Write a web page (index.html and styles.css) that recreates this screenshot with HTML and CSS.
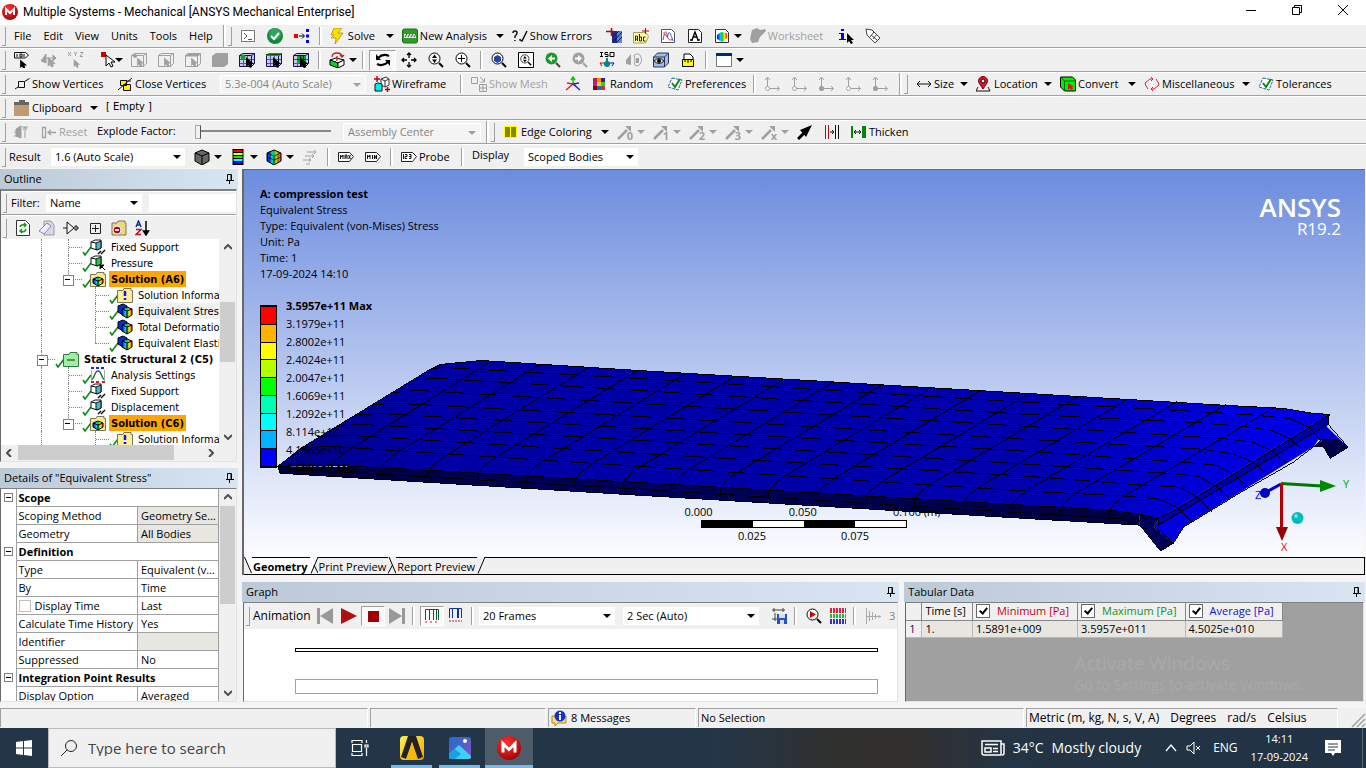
FILE: index.html
```html
<!DOCTYPE html>
<html lang="en">
<head>
<meta charset="utf-8">
<title>Multiple Systems - Mechanical [ANSYS Mechanical Enterprise]</title>
<link rel="stylesheet" href="styles.css">
</head>
<body>
<svg class="sprite" aria-hidden="true">
<defs>
<radialGradient id="redball" cx=".4" cy=".3" r=".8"><stop offset="0" stop-color="#f33"/><stop offset="1" stop-color="#900"/></radialGradient>
<linearGradient id="rain" x1="0" x2="1"><stop offset="0" stop-color="#00f"/><stop offset=".35" stop-color="#0cf"/><stop offset=".5" stop-color="#0c3"/><stop offset=".75" stop-color="#fd0"/><stop offset="1" stop-color="#f20"/></linearGradient>
<linearGradient id="photo" x2="1" y2="1"><stop offset="0" stop-color="#1b6fd0"/><stop offset="1" stop-color="#8a4fc0"/></linearGradient>
<linearGradient id="gold" x2="1" y2="1"><stop offset="0" stop-color="#fff04a"/><stop offset="1" stop-color="#f5a800"/></linearGradient>
</defs>
<symbol id="logo" viewBox="0 0 16 16"><circle cx="8" cy="8" r="8" fill="url(#redball)"/><path d="M4 11V5l4 4 4-4v6" fill="none" stroke="#fff" stroke-width="2"/></symbol>
<symbol id="term" viewBox="0 0 16 16"><path d="M1.500 2.500h13v11h-13z" fill="#fff" stroke="#777"/><path d="M4 5l3 3-3 3M8 11.500h4" fill="none" stroke="#555"/></symbol>
<symbol id="ok" viewBox="0 0 16 16"><circle cx="8" cy="8" r="8" fill="#12883a"/><circle cx="8" cy="6" r="6" fill="#4cc27a" opacity=".5"/><path d="M4 8l3 3 5-6" fill="none" stroke="#fff" stroke-width="2"/></symbol>
<symbol id="branch" viewBox="0 0 16 16"><path d="M0 6h4v4H0z" fill="#e00"/><path d="M5 8h5M8 5.500L10.500 8 8 10.500" fill="none" stroke="#000"/><path d="M12 1h3v3h-3zM12 6.500h3v3h-3zM12 12h3v3h-3z" fill="#00f"/></symbol>
<symbol id="bolt" viewBox="0 0 16 16"><path d="M4 0h8L8 5h5L5 16l1-6H1l3-3H1z" fill="#fd0" stroke="#a80" stroke-width=".7"/></symbol>
<symbol id="newan" viewBox="0 0 16 16"><rect x=".5" y="1" width="15" height="14" rx="2" fill="#2e9b2e" stroke="#187018"/><path d="M2 6h12v4H2z" fill="#d8ecc8"/><path d="M3 9l2-3M6 9l2-3M9 9l2-3M12 9l2-3" stroke="#444"/></symbol>
<symbol id="qcheck" viewBox="0 0 16 16"><path d="M1 5q0-2 2-2t2 2q0 1.500-2 3v2M3 12v1M8 11v1l2 1 5-10" fill="none" stroke="#111" stroke-width="1.500"/></symbol>
<symbol id="section" viewBox="0 0 16 16"><path d="M6 3h10v12H6z" fill="#5a84d8"/><path d="M6 3h5v12H6z" fill="#1c2f80"/><path d="M7 14L16 4M7 9l6-6M10 15l6-6" stroke="#0a1a50"/><path d="M0 3.500h8M5.500 0v8" stroke="#b00" stroke-width="1.500"/></symbol>
<symbol id="abc" viewBox="0 0 16 16"><path d="M.5 4.500h12l3 4-3 6.500H.5z" fill="#ff9" stroke="#a96"/><path d="M2.500 13V8h2v5M2 11h3M6.500 6v7h2V9h-2M12.500 9h-2v4h2" fill="none" stroke="#222"/><path d="M9 3h7M12.500 0v6" stroke="#b00"/></symbol>
<symbol id="chart" viewBox="0 0 16 16"><path d="M1.500 1.500h10l3 3v10h-13z" fill="#fff" stroke="#555"/><path d="M3 12C5 2 6 2 7 7s3 6 6 4" fill="none" stroke="#c33"/><path d="M3 5c3 0 4 8 5 2s3 0 5 6" fill="none" stroke="#36c"/></symbol>
<symbol id="note" viewBox="0 0 16 16"><path d="M1.500 1.500h10l3 3v10h-13z" fill="#fff" stroke="#222"/><path d="M5 12l3-8 3 8M6 9h4M3 12h3M10 12h3" fill="none" stroke="#000" stroke-width="1.400"/></symbol>
<symbol id="imgs" viewBox="0 0 16 16"><path d="M1.500 1.500h10l3 3v10h-13z" fill="#fff" stroke="#333"/><path d="M3 7l4-3 6 1v5l-5 4-5-3z" fill="url(#rain)"/></symbol>
<symbol id="sheet" viewBox="0 0 16 16"><path d="M2 2l5-2 3 2 5-1 1 2-4 4-2 2-2 5-6 1-2-4z" fill="#a0a0a0"/></symbol>
<symbol id="info" viewBox="0 0 16 16"><path d="M3 1h3v2H3zM1 5h5v6h2v1H1v-1h2V6H1z" fill="#00d"/><path d="M9 5v10l2-2 2 3 2-1-2-3h3z" fill="#000"/></symbol>
<symbol id="tag" viewBox="0 0 16 16"><path d="M1 1l6 1 8 8-5 5-8-8zM5 9l4-5M8 11l4-5M6 7l6 5" fill="#fff" stroke="#444"/></symbol>
<symbol id="cur" viewBox="0 0 16 16"><path d="M7 5v10l2-2 2 3 2-1-1-3h3z"/></symbol>
<symbol id="tagcur" viewBox="0 0 16 16"><path d="M.5.500h11l3 2.500-3 3H.5zM3 2v3M6 2h2v3H6zM10 2v3" fill="none" stroke="#111"/><use href="#cur" width="14" height="14" y="3" x="0"/></symbol>
<symbol id="gcur" viewBox="0 0 16 16"><g fill="#a0a0a0" stroke="#a0a0a0"><path d="M0 9l5-7v9zM5 6h8"/><path d="M12 3l3 3-3 3z"/><use href="#cur" x="1" width="14" height="16"/></g></symbol>
<symbol id="xyz" viewBox="0 0 16 16"><path d="M0 0l3 4M3 0L0 4M6 0l1.500 2L9 0M7.500 2v2M12 .5h3l-3 4h3" fill="none" stroke="#a0a0a0"/><use href="#cur" y="3" width="13" height="13" fill="#a0a0a0"/></symbol>
<symbol id="redcur" viewBox="0 0 16 16"><path d="M0 0h5v5H0z" fill="#c00"/><path d="M5 3v11l3-3 2 4 2-1-2-4h4z" fill="#fff" stroke="#000"/></symbol>
<symbol id="gcube" viewBox="0 0 16 16"><path d="M.5 3.500l3-2h12v10l-3 3H.5zM.5 3.500h12v11M12.500 3.500l3-2" fill="none" stroke="#a0a0a0"/><use href="#cur" fill="#a0a0a0" width="14" height="14" y="1"/></symbol>
<symbol id="gcubev" viewBox="0 0 16 16"><use href="#gcube"/><circle cx="4" cy="4" r="2" fill="#a0a0a0"/></symbol>
<symbol id="gcubef" viewBox="0 0 16 16"><use href="#gcube"/><path d="M0 3.500l3-2h13l-3 3H0z" fill="#a0a0a0"/></symbol>
<symbol id="gblock" viewBox="0 0 16 16"><path d="M0 4l4-3h12v11l-4 3H0z" fill="#a0a0a0"/></symbol>
<symbol id="bcube" viewBox="0 0 16 16"><path d="M.5 3.500l3-2h12v10l-3 3H.5z" fill="#c8c8ee"/><path d="M4.500 4v11M8.500 4v11M1 7.500h15M1 11.500h15" fill="none" stroke="#55a"/><path d="M.5 3.500l3-2h12v10l-3 3H.5zM.5 3.500h12v11M12.500 3.500l3-2" fill="none" stroke="#115"/><use href="#cur"/></symbol>
<symbol id="bcube1" viewBox="0 0 16 16"><use href="#bcube"/><circle cx="4" cy="5" r="2.500" fill="#0a2"/></symbol>
<symbol id="bcube2" viewBox="0 0 16 16"><use href="#bcube"/><path d="M3 1h13l-3 3H0z" fill="#0a0"/><path d="M0 2.500h15" stroke="#050"/></symbol>
<symbol id="bcube3" viewBox="0 0 16 16"><use href="#bcube"/><path d="M4 4h9v7H4z" fill="#0a2"/><path d="M7.500 4v7M4 7.500h9M10.500 4v7" stroke="#031"/><use href="#cur"/></symbol>
<symbol id="rotcube" viewBox="0 0 16 16"><path d="M1 8l6-2 8 2-6 3z" fill="#fff" stroke="#000"/><path d="M1 8l8 3v5l-8-3z" fill="#0d2" stroke="#000"/><path d="M9 11l6-3v5l-6 3z" fill="#fff" stroke="#000"/><path d="M3 5q0-4 5-4t5 4M11 3l2 2 2-2M8 4v5" fill="none" stroke="#b22" stroke-width="1.300"/></symbol>
<symbol id="rot" viewBox="0 0 16 16"><path d="M3 6Q8 1 14 4M13 10Q8 15 2 12" fill="none" stroke="#000" stroke-width="2"/><path d="M1 2v6h5zM15 14V8h-5z"/></symbol>
<symbol id="move" viewBox="0 0 16 16"><path d="M8 1v5M8 10v5M1 8h5M10 8h5M6 3l2-2 2 2M6 13l2 2 2-2M3 6L1 8l2 2M13 6l2 2-2 2" fill="none" stroke="#000" stroke-width="1.300"/></symbol>
<symbol id="mag" viewBox="0 0 16 16"><circle cx="6.500" cy="6.500" r="5.500" fill="#fff" stroke="#000"/><path d="M11 11l4 4" stroke="#000" stroke-width="2"/></symbol>
<symbol id="magud" viewBox="0 0 16 16"><use href="#mag"/><path d="M4 6l2.500-3.500L9 6zM4 7.500L6.500 11 9 7.500z"/></symbol>
<symbol id="magp" viewBox="0 0 16 16"><use href="#mag"/><path d="M3 6.500h7M6.500 3v7" stroke="#000"/></symbol>
<symbol id="magb" viewBox="0 0 16 16"><use href="#mag"/><path d="M3 5l3.500-2L10 5v4l-3.500 2L3 9z" fill="#24a"/></symbol>
<symbol id="magbox" viewBox="0 0 16 16"><path d="M.5.5h15v15H.5z" fill="#fff" stroke="#000"/><use href="#magud" x="2" y="2" width="12" height="12"/></symbol>
<symbol id="magg" viewBox="0 0 16 16"><circle cx="6.500" cy="6.500" r="6" fill="#1c9a2c"/><path d="M10 5.500H7V3L3 6.500 7 10V7.500h3z" fill="#fff"/><path d="M11 11l4 4" stroke="#444" stroke-width="2"/></symbol>
<symbol id="maggr" viewBox="0 0 16 16"><circle cx="6.500" cy="6.500" r="6" fill="#a0a0a0"/><path d="M3 5.500h3V3l4 3.500L6 10V7.500H3z" fill="#fff"/><path d="M11 11l4 4" stroke="#a0a0a0" stroke-width="2"/></symbol>
<symbol id="iso" viewBox="0 0 16 16"><path d="M1 .5h3M2.500 0v5M1 4.500h3M9 .5H6v2h3v2H6M11 .5h4v4h-4z" fill="none" stroke="#000"/><path d="M8 11V6" stroke="#088" stroke-width="2"/><path d="M8 11H1l2 3" fill="none" stroke="#c00"/><path d="M8 11h7l-2 3" fill="none" stroke="#00c"/><circle cx="8" cy="12" r="3" fill="#088"/></symbol>
<symbol id="face" viewBox="0 0 16 16"><path d="M0 8l5-6v11l-5-1z" fill="#a0a0a0"/><path d="M8 3q5-3 7 2t-3 9q-5 0-3-5z" fill="none" stroke="#a0a0a0"/><path d="M10 6h3v5h-3z" fill="#a0a0a0"/></symbol>
<symbol id="eye" viewBox="0 0 16 16"><path d="M.5 5l4-4h11v10l-4 4H.5z" fill="#9bc0e8" stroke="#335"/><path d="M.5 5h11v10M11.500 5l4-4" fill="none" stroke="#335"/><path d="M1 9q5-5 10 0-5 5-10 0" fill="#ddd" stroke="#222"/><circle cx="6" cy="9" r="2"/></symbol>
<symbol id="ruler" viewBox="0 0 16 16"><path d="M4 7V2h6l3 3v2" fill="#fff" stroke="#000"/><path d="M2.500 7.500h11v7h-11z" fill="#ff0" stroke="#000"/><path d="M5 7v3M8 7v4M11 7v3" stroke="#000"/></symbol>
<symbol id="win" viewBox="0 0 16 16"><path d="M.5 1.500h15v13H.5z" fill="#fff" stroke="#777"/><path d="M0 1h16v3H0z" fill="#002a80"/></symbol>
<symbol id="vtx" viewBox="0 0 16 16"><path d="M4.500 5.500h6v6h-6zM1 13l3-2M10.500 5.500l5-3" fill="none" stroke="#111"/></symbol>
<symbol id="cvtx" viewBox="0 0 16 16"><path d="M3.500 4.500h6v5h-6zM6.500 8.500h7v6h-7z" fill="#fe0" stroke="#111"/><path d="M1 14l14-12M9 5h5" stroke="#111"/></symbol>
<symbol id="wire" viewBox="0 0 16 16"><path d="M7 3l5-2 3 2v6l-4 2-4-2zM7 3l4 2 4-2M11 5v6" fill="#fff" stroke="#333"/><path d="M1 8l3-1 4 1v7H1z" fill="#0ee" stroke="#111"/><path d="M0 3h6M3 0v6M11 13.500h5M13.500 11v5" stroke="#b00" stroke-width="1.400"/></symbol>
<symbol id="smesh" viewBox="0 0 16 16"><path d="M.5 1.500h6v6h-6zM9 1l4 4M13.500 2v4h-4M8.500 8.500h7v7h-7zM12 8v8M8 12h8" fill="none" stroke="#a0a0a0"/></symbol>
<symbol id="axes" viewBox="0 0 16 16"><path d="M8 8V1M6 4l2-3 2 3" fill="none" stroke="#0c0" stroke-width="1.500"/><path d="M8 8l-7 6M8 8l-6-1M8 8l3 2" stroke="#d22" stroke-width="1.500"/><path d="M8 8l7 6M8 8l6-1" stroke="#22d" stroke-width="1.500"/></symbol>
<symbol id="random" viewBox="0 0 16 16"><path d="M1 2h4v4H1z" fill="#b22"/><path d="M5 2h4v4H5z" fill="#f80"/><path d="M9 2h4v4H9z" fill="#22a"/><path d="M1 6h4v4H1z" fill="#a2a"/><path d="M5 6h4v4H5z" fill="#ed0"/><path d="M9 6h4v4H9z" fill="#3c3"/><path d="M1 10h4v4H1z" fill="#800"/><path d="M5 10h4v4H5z" fill="#26c"/><path d="M9 10h4v4H9z" fill="#c33"/></symbol>
<symbol id="pref" viewBox="0 0 16 16"><path d="M5 2l10 2-4 10L1 11z" fill="#fff" stroke="#269" stroke-dasharray="3 1"/><path d="M5 7l3 4 5-8" fill="none" stroke="#181" stroke-width="2"/></symbol>
<symbol id="edge" viewBox="0 0 16 16"><path d="M3.500 13V2M1 4l2.500-3L6 4M4 12.500h11M13 10l2.500 2.500L13 15" fill="none" stroke="#a0a0a0"/><circle cx="3.500" cy="12.500" r="2" fill="#fff" stroke="#a0a0a0"/></symbol>
<symbol id="edgef" viewBox="0 0 16 16"><use href="#edge"/><circle cx="3.500" cy="12.500" r="2.500" fill="#a0a0a0"/></symbol>
<symbol id="size" viewBox="0 0 16 16"><path d="M1 8h14M4 5L1 8l3 3M12 5l3 3-3 3" fill="none" stroke="#111"/></symbol>
<symbol id="loc" viewBox="0 0 16 16"><path d="M7 13L3 7a4.500 4.500 0 1 1 8 0z" fill="#e13" stroke="#700"/><circle cx="7" cy="5" r="2" fill="#fff" stroke="#000"/><path d="M2 11l-2 4h14l-2-4" fill="none" stroke="#111"/></symbol>
<symbol id="conv" viewBox="0 0 16 16"><path d="M.5 1h12l3 3v11h-11l-4-4z" fill="#0e0" stroke="#000"/><path d="M.5 1l4 4v10M4.500 5h11" fill="none" stroke="#060"/><path d="M8 7v7l2-2 1 2 2-1-1-2h2z" fill="#d11"/></symbol>
<symbol id="misc" viewBox="0 0 16 16"><path d="M2 10L1 7l5-4h3M7 1l2 2-2 2M14 6l1 3-5 4H7M9 11l-2 2 2 2M12 3l2 3M2 10l2 3" fill="none" stroke="#d23"/></symbol>
<symbol id="clip" viewBox="0 0 16 16"><path d="M0 2h15v14H0z" fill="#c09a72"/><path d="M0 2h15v3H0zM5 0h6v3H5z" fill="#666"/></symbol>
<symbol id="expl" viewBox="0 0 16 16"><path d="M2 5l5-3v12l-5-2zM0 8h3M0 12h3" fill="#a0a0a0" stroke="#a0a0a0"/><path d="M8 3h6M11 3v11M9 6l2-3 2 3" fill="none" stroke="#a0a0a0"/></symbol>
<symbol id="reset" viewBox="0 0 16 16"><path d="M1.500 3.500h3v10h-3zM7 8.500h8M10 6L7 8.500l3 2.500" fill="none" stroke="#a0a0a0" stroke-width="1.300"/></symbol>
<symbol id="ecol" viewBox="0 0 16 16"><path d="M1 2h13v12H1z" fill="#ff0"/><path d="M2 3h5v10H2zM8 3h5v10H8z" fill="#880"/></symbol>
<symbol id="slash" viewBox="0 0 16 16"><path d="M1 15L10 6" stroke="#a0a0a0" stroke-width="2.500"/><path d="M15 1v6L9 1z" fill="#a0a0a0" transform="translate(-1 1)"/></symbol>
<symbol id="barrow" viewBox="0 0 16 16"><path d="M1 15L9 7" stroke="#000" stroke-width="3"/><path d="M15 1L3 6l6 7zM15 1l-3 9"/></symbol>
<symbol id="gap" viewBox="0 0 16 16"><path d="M1.500 1v14M4.500 1v14" stroke="#a11"/><path d="M11.500 1v14M14.500 1v14M6 8h4M8 6l2 2-2 2" fill="none" stroke="#111"/></symbol>
<symbol id="thick" viewBox="0 0 16 16"><path d="M1 2v12" stroke="#080" stroke-width="2"/><path d="M11 2h4v12h-4z" fill="#080"/><path d="M3 8h7M5 6L3 8l2 2M8 6l2 2-2 2" fill="none" stroke="#111"/></symbol>
<symbol id="cube" viewBox="0 0 16 16"><path d="M1 4l7-3 7 3v8l-7 4-7-4z" fill="#666" stroke="#000"/><path d="M1 4l7 3 7-3M8 7v9" fill="none" stroke="#000"/></symbol>
<symbol id="rcube" viewBox="0 0 16 16"><path d="M1 4l7-3 7 3v8l-7 4-7-4z" fill="url(#rain)" stroke="#000"/><path d="M1 4l7 3 7-3M8 7v9M1 8l7 3 7-3M4 2v12M12 2v12" fill="none" stroke="#111" stroke-width=".8"/></symbol>
<symbol id="bands" viewBox="0 0 11 16"><path d="M0 0h11v16H0z"/><path d="M1 1h9v2H1z" fill="#f00"/><path d="M1 4h9v2H1z" fill="#ff0"/><path d="M1 7h9v2H1z" fill="#0e0"/><path d="M1 10h9v2H1z" fill="#0ff"/><path d="M1 13h9v2H1z" fill="#00f"/></symbol>
<symbol id="vecs" viewBox="0 0 16 16"><path d="M5 3h9M3 7h9M1 11h8M12 1l2 2-2 2M10 5l2 2-2 2M7 9l2 2-2 2M4 15h4" fill="none" stroke="#a0a0a0"/></symbol>
<symbol id="max" viewBox="0 0 16 16"><path d="M.5 3.500h11l4 4-4 5H.5z" fill="#fff" stroke="#222"/><path d="M2.500 10V6l1.500 2 1-2v4M7 10V6h2v4M7 8h2M10.500 6l2 4M12.500 6l-2 4" fill="none" stroke="#111"/></symbol>
<symbol id="min" viewBox="0 0 16 16"><path d="M.5 3.500h11l4 4-4 5H.5z" fill="#fff" stroke="#222"/><path d="M2.500 10V6l1.500 2 1-2v4M7.500 6v4M9.500 10V6l2 4V6" fill="none" stroke="#111"/></symbol>
<symbol id="probe" viewBox="0 0 16 16"><path d="M.5 3.500h11l4 4-4 5H.5z" fill="#fff" stroke="#222"/><path d="M2.500 5v5M4 5.500h2v2H4v2h2M8 5.500h2v4H8M8 7.500h2" fill="none" stroke="#111"/></symbol>
<symbol id="refresh" viewBox="0 0 16 16"><path d="M1.500.5h9l4 4v11h-13z" fill="#fff" stroke="#333"/><path d="M5 7q1-3 5-2M11 9q-1 4-5 2M9 3l2 2-2 2M7 9l-2 2 2 2" fill="none" stroke="#191" stroke-width="1.500"/></symbol>
<symbol id="eraser" viewBox="0 0 16 16"><path d="M5 1h7l3 4v10H5z" fill="#d8d8e4" stroke="#99a"/><path d="M0 11l8-8 4 3-7 8z" fill="#eef" stroke="#88a"/></symbol>
<symbol id="gate" viewBox="0 0 16 16"><path d="M0 8h4M4 2v12l7-6zM12 6h2v4h-2zM14 8h2" fill="none" stroke="#111"/></symbol>
<symbol id="plus" viewBox="0 0 16 16"><path d="M3.500 3.500h10v10h-10zM8.500 5v7M5 8.500h7" fill="none" stroke="#222"/></symbol>
<symbol id="folder" viewBox="0 0 16 16"><path d="M1 3h5l1-2h7v2h1v12H1z" fill="#f0d878" stroke="#776"/><circle cx="6" cy="10" r="4" fill="#b02" stroke="#fff"/><path d="M4 10h4" stroke="#fff" stroke-width="2"/></symbol>
<symbol id="az" viewBox="0 0 16 16"><path d="M1 7l2.500-6L6 7M2 5h3" fill="none" stroke="#139" stroke-width="1.500"/><path d="M1 9.500h5l-5 5h5" fill="none" stroke="#b12" stroke-width="1.500"/><path d="M11 1v12M8.500 11l2.500 4 2.500-4z" stroke="#000" stroke-width="1.500"/></symbol>
<symbol id="chk" viewBox="0 0 10 10"><path d="M1 6l2 3 6-8" fill="none" stroke="#0a8a12" stroke-width="1.600"/></symbol>
<symbol id="sup" viewBox="0 0 16 16"><path d="M1 3l4-2h6v8l-4 2-6-2z" fill="#fff" stroke="#111"/><path d="M6 4l5-2v7l-4 2-1-1z" fill="#4bd" stroke="#111"/><path d="M1 3l5 1" stroke="#111"/><path d="M8 15l3-3M11 15l4-4" stroke="#000" stroke-width="1.400"/></symbol>
<symbol id="pres" viewBox="0 0 16 16"><path d="M1 3l4-2h6v8l-4 2-6-2z" fill="#fff" stroke="#111"/><path d="M6 4l5-2v7l-4 2-1-1z" fill="#2c4" stroke="#111"/><path d="M1 3l5 1" stroke="#111"/><path d="M10 10h4l-4 4zM12 12l3 3" stroke="#000"/></symbol>
<symbol id="soln" viewBox="0 0 16 16"><path d="M.5 3.500H6l1-2h7v2h1.500v12H.5z" fill="#ffe98a" stroke="#775"/><path d="M3 8l5-2 5 2v4l-5 3-5-3z" fill="url(#rain)" stroke="#000"/><path d="M3 8l5 2 5-2M8 10v5" fill="none" stroke="#000"/></symbol>
<symbol id="sinfo" viewBox="0 0 16 16"><path d="M.5 3.500H6l1-2h7v2h1.500v12H.5z" fill="#ffef9a" stroke="#775"/><path d="M8 4v5M8 11v2" stroke="#11d" stroke-width="2.500"/></symbol>
<symbol id="res" viewBox="0 0 16 16"><path d="M1 3l5-2 4 2v7l-4 2-5-3z" fill="#03c" stroke="#000"/><path d="M5 6l5-2 5 2v6l-5 3-5-3z" fill="url(#rain)" stroke="#000"/><path d="M5 6l5 2 5-2M10 8v7" fill="none" stroke="#000"/></symbol>
<symbol id="struct" viewBox="0 0 16 16"><path d="M.5 3.500H6l1-2h7v2h1.500v12H.5z" fill="#9df09d" stroke="#374"/><path d="M4 9h8" stroke="#222"/></symbol>
<symbol id="aset" viewBox="0 0 16 16"><path d="M1 13c4-1 3-9 7-9s3 8 7 9" fill="none" stroke="#264" stroke-width="1.300"/><path d="M1 1h3M6 1h3M11 1h3" stroke="#22d" stroke-width="2"/><path d="M1 15h3M6 15h3M12 15h3" stroke="#c22" stroke-width="2"/><path d="M1.500 3v10M14.500 3v10" stroke="#aaa"/></symbol>
<symbol id="pin" viewBox="0 0 8 10"><path d="M1.500 6V.5h4V6M5 1v5M0 6.500h8M3.500 7v3" fill="none" stroke="#000"/></symbol>
<symbol id="first" viewBox="0 0 16 16"><path d="M0 0h3v16H0zM16 0v16L3 8z" fill="#999"/></symbol>
<symbol id="last" viewBox="0 0 16 16"><path d="M13 0h3v16h-3zM0 0v16l13-8z" fill="#999"/></symbol>
<symbol id="play" viewBox="0 0 16 16"><path d="M0 0l16 8-16 8z" fill="#b01010"/></symbol>
<symbol id="stop" viewBox="0 0 16 16"><path d="M3 3h11v11H3z" fill="#a00000"/></symbol>
<symbol id="comb" viewBox="0 0 16 16"><path d="M1.500 12V1.500h13V12M5.500 1v11M9.500 1v11M12.500 1v11" fill="none" stroke="#153"/><path d="M1 14h3M6 14h3M11 14h3" stroke="#c22" stroke-dasharray="2 1"/></symbol>
<symbol id="combb" viewBox="0 0 16 16"><path d="M1.500 10V.5h12V10M4.500 1v9M9.500 1v9M10.500 1v9" fill="none" stroke="#139"/><path d="M1 13h13" stroke="#c22" stroke-dasharray="2 1"/></symbol>
<symbol id="save" viewBox="0 0 16 16"><path d="M1 2h13M3 0v4M12 0v4M4 5v8M1 11h6" stroke="#444" fill="none"/><path d="M6 6h10v10H6z" fill="#25b"/><path d="M8 6h6v4H8zM9 12h4v4H9z" fill="#dde"/></symbol>
<symbol id="magr" viewBox="0 0 16 16"><use href="#mag"/><path d="M4 3l6 3.500L4 10z" fill="#c00"/></symbol>
<symbol id="grid3" viewBox="0 0 16 16"><path d="M0 2.500h16" stroke="#d24" stroke-width="5" stroke-dasharray="2 1"/><path d="M0 8h16" stroke="#2b4" stroke-width="4" stroke-dasharray="2 1"/><path d="M0 13.500h16" stroke="#33c" stroke-width="5" stroke-dasharray="2 1"/></symbol>
<symbol id="hist" viewBox="0 0 16 16"><path d="M1.500 0v16M4.500 3v10M7.500 4v8M10.500 6v5M14 7v3M1 8.500h15" stroke="#aaa"/></symbol>
<symbol id="msg" viewBox="0 0 16 16"><path d="M1 6h14v7H7l-3 3v-3H1z" fill="#fd6" stroke="#a82"/><circle cx="9" cy="6" r="5.500" fill="#13c"/><path d="M9 2v2M9 5v5" stroke="#fff" stroke-width="2"/></symbol>
</svg>

<header class="titlebar">
<svg class="ic"><use href="#logo"/></svg><h1>Multiple Systems - Mechanical [ANSYS Mechanical Enterprise]</h1>
<div class="winbtns">
<button aria-label="Minimize"><svg viewBox="0 0 12 12"><path d="M1 6.500h10" stroke="#000"/></svg></button>
<button aria-label="Restore"><svg viewBox="0 0 12 12"><path d="M1.500 3.500h7v7h-7zM3.500 3V1.500h7v7H9" fill="none" stroke="#000"/></svg></button>
<button aria-label="Close"><svg viewBox="0 0 12 12"><path d="M1 1l10 10M11 1L1 11" stroke="#000"/></svg></button>
</div>
</header>

<div class="bar">
<i class="grip"></i>
<nav class="menu"><button>File</button><button>Edit</button><button>View</button><button>Units</button><button>Tools</button><button>Help</button></nav>
<i class="end"></i><i class="grip"></i>
<button class="ib" aria-label="Command window"><svg class="ic"><use href="#term"/></svg></button>
<button class="ib" aria-label="Check"><svg class="ic"><use href="#ok"/></svg></button>
<button class="ib" aria-label="Generate"><svg class="ic"><use href="#branch"/></svg></button>
<i class="sep"></i>
<button class="tb w-m"><svg class="ic"><use href="#bolt"/></svg>Solve</button><button class="dd" aria-label="Solve options"></button>
<button class="tb w-xl"><svg class="ic"><use href="#newan"/></svg>New Analysis</button><button class="dd" aria-label="Analysis types"></button>
<button class="tb w-xl"><svg class="ic"><use href="#qcheck"/></svg>Show Errors</button>
<button class="ib" aria-label="Section plane"><svg class="ic"><use href="#section"/></svg></button>
<button class="ib" aria-label="Annotation"><svg class="ic"><use href="#abc"/></svg></button>
<button class="ib" aria-label="Chart"><svg class="ic"><use href="#chart"/></svg></button>
<button class="ib" aria-label="Comment"><svg class="ic"><use href="#note"/></svg></button>
<button class="ibd" aria-label="Figure"><svg class="ic"><use href="#imgs"/></svg></button><button class="dd" aria-label="Figure options"></button>
<button class="tb w-l off" disabled><svg class="ic"><use href="#sheet"/></svg>Worksheet</button>
<button class="ib" aria-label="Selection information"><svg class="ic"><use href="#info"/></svg></button>
<button class="ib" aria-label="Tag"><svg class="ic"><use href="#tag"/></svg></button>
</div>

<div class="bar">
<i class="grip"></i>
<button class="ib" aria-label="Label"><svg class="ic"><use href="#tagcur"/></svg></button>
<button class="ib" aria-label="Direction"><svg class="ic"><use href="#gcur"/></svg></button>
<button class="ib" aria-label="Coordinates"><svg class="ic"><use href="#xyz"/></svg></button>
<button class="ibd push" aria-label="Select mode"><svg class="ic"><use href="#redcur"/></svg></button><button class="dd" aria-label="Select mode options"></button>
<button class="ib" aria-label="Vertex"><svg class="ic"><use href="#gcubev"/></svg></button>
<button class="ib" aria-label="Edge"><svg class="ic"><use href="#gcube"/></svg></button>
<button class="ib" aria-label="Face"><svg class="ic"><use href="#gcubef"/></svg></button>
<button class="ib" aria-label="Body"><svg class="ic"><use href="#gblock"/></svg></button>
<button class="ib" aria-label="Node"><svg class="ic"><use href="#bcube1"/></svg></button>
<button class="ib" aria-label="Element face"><svg class="ic"><use href="#bcube2"/></svg></button>
<button class="ib" aria-label="Element"><svg class="ic"><use href="#bcube3"/></svg></button>
<i class="sep"></i>
<button class="ibd" aria-label="Extend"><svg class="ic"><use href="#rotcube"/></svg></button><button class="dd" aria-label="Extend options"></button>
<i class="sep tight"></i>
<button class="ib pressed" aria-label="Rotate"><svg class="ic"><use href="#rot"/></svg></button>
<button class="ib pad" aria-label="Pan"><svg class="ic"><use href="#move"/></svg></button>
<button class="ib" aria-label="Zoom"><svg class="ic"><use href="#magud"/></svg></button>
<button class="ib" aria-label="Box zoom"><svg class="ic"><use href="#magp"/></svg></button>
<i class="sep"></i>
<button class="ib" aria-label="Zoom to fit"><svg class="ic"><use href="#magb"/></svg></button>
<button class="ib" aria-label="Magnifier window"><svg class="ic"><use href="#magbox"/></svg></button>
<button class="ib" aria-label="Previous view"><svg class="ic"><use href="#magg"/></svg></button>
<button class="ib" aria-label="Next view"><svg class="ic"><use href="#maggr"/></svg></button>
<button class="ib" aria-label="Isometric"><svg class="ic"><use href="#iso"/></svg></button>
<button class="ib" aria-label="Look at"><svg class="ic"><use href="#face"/></svg></button>
<button class="ib" aria-label="Manage views"><svg class="ic"><use href="#eye"/></svg></button>
<button class="ib" aria-label="Rescale"><svg class="ic"><use href="#ruler"/></svg></button>
<i class="sep"></i>
<button class="ibd" aria-label="Viewports"><svg class="ic"><use href="#win"/></svg></button><button class="dd" aria-label="Viewport layout"></button>
</div>

<div class="bar">
<i class="grip"></i>
<button class="tb w-xxl"><svg class="ic"><use href="#vtx"/></svg>Show Vertices</button>
<button class="tb w-xxl"><svg class="ic"><use href="#cvtx"/></svg>Close Vertices</button>
<span class="combo c-l flat"><select disabled aria-label="Vertex scale"><option>5.3e-004 (Auto Scale)</option></select></span>
<button class="tb w-l"><svg class="ic"><use href="#wire"/></svg>Wireframe</button>
<i class="sep"></i>
<button class="tb w-xl off" disabled><svg class="ic"><use href="#smesh"/></svg>Show Mesh</button>
<button class="ib" aria-label="Show coordinate systems"><svg class="ic"><use href="#axes"/></svg></button>
<button class="tb w-r"><svg class="ic"><use href="#random"/></svg>Random</button>
<button class="tb w-l"><svg class="ic"><use href="#pref"/></svg>Preferences</button>
<i class="sep"></i>
<button class="ib" aria-label="Edge direction 1"><svg class="ic"><use href="#edge"/></svg></button>
<button class="ib" aria-label="Edge direction 2"><svg class="ic"><use href="#edge"/></svg></button>
<button class="ib" aria-label="Edge direction 3"><svg class="ic"><use href="#edgef"/></svg></button>
<button class="ib" aria-label="Edge direction 4"><svg class="ic"><use href="#edge"/></svg></button>
<button class="ib" aria-label="Edge direction 5"><svg class="ic"><use href="#edgef"/></svg></button>
<i class="end"></i><i class="grip"></i>
<button class="tb w-s"><svg class="ic"><use href="#size"/></svg>Size</button><button class="dd" aria-label="Size options"></button>
<button class="tb w-r2"><svg class="ic"><use href="#loc"/></svg>Location</button><button class="dd" aria-label="Location options"></button>
<button class="tb w-r2"><svg class="ic"><use href="#conv"/></svg>Convert</button><button class="dd" aria-label="Convert options"></button>
<button class="tb w-mx"><svg class="ic"><use href="#misc"/></svg>Miscellaneous</button><button class="dd" aria-label="Miscellaneous options"></button>
<button class="tb"><svg class="ic"><use href="#pref"/></svg>Tolerances</button>
</div>

<div class="bar">
<i class="grip"></i>
<button class="tb w-c"><svg class="ic"><use href="#clip"/></svg>Clipboard</button><button class="dd" aria-label="Clipboard options"></button>
<span class="small">[ Empty ]</span>
</div>

<div class="bar">
<i class="grip"></i>
<button class="ib" aria-label="Explode"><svg class="ic"><use href="#expl"/></svg></button>
<button class="tb w-m off" disabled><svg class="ic"><use href="#reset"/></svg>Reset</button>
<label class="lbl w-mx" for="explode">Explode Factor:</label>
<input id="explode" class="slider" type="range" value="0">
<span class="combo c-e flat"><select disabled aria-label="Explode origin"><option>Assembly Center</option></select></span>
<i class="end"></i><i class="grip"></i>
<button class="tb w-mx"><svg class="ic"><use href="#ecol"/></svg>Edge Coloring</button><button class="dd" aria-label="Edge coloring options"></button>
<button class="ibd num" aria-label="Edges 0"><svg class="ic"><use href="#slash"/></svg><b>0</b></button><button class="dd gray" aria-label="Edges 0 options"></button>
<button class="ibd num" aria-label="Edges 1"><svg class="ic"><use href="#slash"/></svg><b>1</b></button><button class="dd gray" aria-label="Edges 1 options"></button>
<button class="ibd num" aria-label="Edges 2"><svg class="ic"><use href="#slash"/></svg><b>2</b></button><button class="dd gray" aria-label="Edges 2 options"></button>
<button class="ibd num" aria-label="Edges 3"><svg class="ic"><use href="#slash"/></svg><b>3</b></button><button class="dd gray" aria-label="Edges 3 options"></button>
<button class="ibd num" aria-label="Edges X"><svg class="ic"><use href="#slash"/></svg><b>x</b></button><button class="dd gray" aria-label="Edges X options"></button>
<button class="ib" aria-label="Edge direction"><svg class="ic"><use href="#barrow"/></svg></button>
<button class="ib" aria-label="Gap"><svg class="ic"><use href="#gap"/></svg></button>
<button class="tb"><svg class="ic"><use href="#thick"/></svg>Thicken</button>
</div>

<div class="bar last">
<i class="grip narrow"></i>
<label class="lbl w-res" for="scale">Result</label>
<span class="combo c-m"><select id="scale"><option>1.6 (Auto Scale)</option></select></span>
<button class="ibd" aria-label="Geometry display"><svg class="ic"><use href="#cube"/></svg></button><button class="dd" aria-label="Geometry display options"></button>
<button class="ibd" aria-label="Contours"><svg class="ic"><use href="#bands"/></svg></button><button class="dd" aria-label="Contour options"></button>
<button class="ibd" aria-label="Edges"><svg class="ic"><use href="#rcube"/></svg></button><button class="dd" aria-label="Edge options"></button>
<button class="ib" aria-label="Vectors"><svg class="ic"><use href="#vecs"/></svg></button>
<i class="sep"></i>
<button class="ib" aria-label="Maximum"><svg class="ic"><use href="#max"/></svg></button>
<button class="ib" aria-label="Minimum"><svg class="ic"><use href="#min"/></svg></button>
<i class="sep"></i>
<button class="tb w-p"><svg class="ic"><use href="#probe"/></svg>Probe</button>
<i class="sep"></i>
<label class="lbl w-disp" for="disp">Display</label>
<span class="combo c-s"><select id="disp"><option>Scoped Bodies</option></select></span>
</div>

<main>
<aside>
<section class="pane outline">
<h2>Outline<svg class="pin"><use href="#pin"/></svg></h2>
<div class="frame">
<div class="bar sub"><i class="grip"></i><label class="flabel" for="ftype">Filter:</label><span class="combo c-f"><select id="ftype"><option>Name</option></select></span><input class="ftext" aria-label="Filter text"></div>
<div class="bar sub nob"><i class="grip"></i>
<button class="ic24" aria-label="Refresh"><svg class="ic"><use href="#refresh"/></svg></button>
<button class="ic24" aria-label="Clear"><svg class="ic"><use href="#eraser"/></svg></button>
<button class="ic24" aria-label="Graph view"><svg class="ic"><use href="#gate"/></svg></button>
<button class="ic24" aria-label="Expand all"><svg class="ic"><use href="#plus"/></svg></button>
<button class="ic24" aria-label="Hide folders"><svg class="ic"><use href="#folder"/></svg></button>
<button class="ic24" aria-label="Sort"><svg class="ic"><use href="#az"/></svg></button>
</div>
<div class="scrollbox">
<ul class="tree">
<li><i class="v"></i><i class="v h"></i><svg class="ck"><use href="#chk"/></svg><svg class="ic"><use href="#sup"/></svg><span>Fixed Support</span></li>
<li><i class="v"></i><i class="v h"></i><svg class="ck"><use href="#chk"/></svg><svg class="ic"><use href="#pres"/></svg><span>Pressure</span></li>
<li><i class="v"></i><i class="l h m"></i><svg class="ck"><use href="#chk"/></svg><svg class="ic"><use href="#soln"/></svg><span class="sol">Solution (A6)</span></li>
<li><i class="v"></i><i></i><i class="v h"></i><svg class="ck"><use href="#chk"/></svg><svg class="ic"><use href="#sinfo"/></svg><span>Solution Information</span></li>
<li><i class="v"></i><i></i><i class="v h"></i><svg class="ck"><use href="#chk"/></svg><svg class="ic"><use href="#res"/></svg><span class="sel">Equivalent Stress</span></li>
<li><i class="v"></i><i></i><i class="v h"></i><svg class="ck"><use href="#chk"/></svg><svg class="ic"><use href="#res"/></svg><span>Total Deformation</span></li>
<li><i class="v"></i><i></i><i class="l h"></i><svg class="ck"><use href="#chk"/></svg><svg class="ic"><use href="#res"/></svg><span>Equivalent Elastic Strain</span></li>
<li><i class="v h m"></i><svg class="ck"><use href="#chk"/></svg><svg class="ic"><use href="#struct"/></svg><span class="b">Static Structural 2 (C5)</span></li>
<li><i class="v"></i><i class="v h"></i><svg class="ck"><use href="#chk"/></svg><svg class="ic"><use href="#aset"/></svg><span>Analysis Settings</span></li>
<li><i class="v"></i><i class="v h"></i><svg class="ck"><use href="#chk"/></svg><svg class="ic"><use href="#sup"/></svg><span>Fixed Support</span></li>
<li><i class="v"></i><i class="v h"></i><svg class="ck"><use href="#chk"/></svg><svg class="ic"><use href="#sup"/></svg><span>Displacement</span></li>
<li><i class="v"></i><i class="l h m"></i><svg class="ck"><use href="#chk"/></svg><svg class="ic"><use href="#soln"/></svg><span class="sol">Solution (C6)</span></li>
<li><i class="v"></i><i></i><i class="v h"></i><svg class="ck"><use href="#chk"/></svg><svg class="ic"><use href="#sinfo"/></svg><span>Solution Information</span></li>
</ul>
<div class="vscroll"><svg viewBox="0 0 8 6"><path d="M0 5l4-4 4 4"/></svg><div class="track"><i class="thumb t-out"></i></div><svg viewBox="0 0 8 6"><path d="M0 1l4 4 4-4"/></svg></div>
</div>
<div class="hscroll"><svg viewBox="0 0 6 8"><path d="M5 0L1 4l4 4"/></svg><div class="htrack"><i class="hthumb"></i></div><svg viewBox="0 0 6 8"><path d="M1 0l4 4-4 4"/></svg></div>
</div>
</section>
<section class="pane details">
<h2>Details of "Equivalent Stress"<svg class="pin"><use href="#pin"/></svg></h2>
<div class="frame thin row">
<div class="tablewrap">
<table class="props">
<colgroup><col class="k0"><col><col class="k2"></colgroup>
<tr><td class="gut"><i class="box"></i></td><th colspan="2">Scope</th></tr>
<tr><td class="gut"></td><td>Scoping Method</td><td class="ro">Geometry Selection</td></tr>
<tr><td class="gut"></td><td>Geometry</td><td class="ro">All Bodies</td></tr>
<tr><td class="gut"><i class="box"></i></td><th colspan="2">Definition</th></tr>
<tr><td class="gut"></td><td>Type</td><td>Equivalent (von-Mises) Stress</td></tr>
<tr><td class="gut"></td><td>By</td><td>Time</td></tr>
<tr><td class="gut"></td><td><label><input type="checkbox">Display Time</label></td><td>Last</td></tr>
<tr><td class="gut"></td><td>Calculate Time History</td><td>Yes</td></tr>
<tr><td class="gut"></td><td>Identifier</td><td class="ro"></td></tr>
<tr><td class="gut"></td><td>Suppressed</td><td>No</td></tr>
<tr><td class="gut"><i class="box"></i></td><th colspan="2">Integration Point Results</th></tr>
<tr><td class="gut"></td><td>Display Option</td><td>Averaged</td></tr>
</table>
</div>
<div class="vscroll"><svg viewBox="0 0 8 6"><path d="M0 5l4-4 4 4"/></svg><div class="track"><i class="thumb t-det"></i></div><svg viewBox="0 0 8 6"><path d="M0 1l4 4 4-4"/></svg></div>
</div>
</section>
</aside>

<div class="work">
<section class="view">
<div class="scene">
<svg id="model" class="model" viewBox="245 170 1119 388" preserveAspectRatio="xMinYMax meet" role="img" aria-label="Deformed plate with mesh">
<defs><linearGradient id="top" gradientUnits="userSpaceOnUse" x1="290" y1="430" x2="1250" y2="480"><stop offset="0" stop-color="#000084"/><stop offset=".13" stop-color="#0000a4"/><stop offset=".78" stop-color="#0000ae"/><stop offset="1" stop-color="#0000e2"/></linearGradient>
<linearGradient id="front" gradientUnits="userSpaceOnUse" x1="280" y1="0" x2="1150" y2="0"><stop offset="0" stop-color="#000038"/><stop offset=".4" stop-color="#00005c"/><stop offset="1" stop-color="#000040"/></linearGradient></defs>
<path d="M279 467L302 449 433 369 441 365 483 361 640 371 1030 394 1230 406 1287 409 1317 414 1333 415 1162 520 1143 515 1112 511 430 471 333 466z" fill="url(#top)"/>
<path d="M1162 520L1333 415 1332 425 1318 447 1187 528 1177 544 1157 528z" fill="#0000e2"/>
<path d="M1315 427L1330 427 1352 448 1342 442 1323 441z" fill="#0000d4"/>
<path d="M279 467L382 468 1112 511 1143 515 1143 526 1040 520 640 496 281 474z" fill="url(#front)"/>
<path d="M1143 515L1162 520 1157 528 1177 544 1164 552 1143 526z" fill="#000058"/>
<path d="M1318 447L1327 440 1342 440 1352 448 1334 459 1327 447z" fill="#00004a"/>
<path d="M1162 520L1333 415 1332 425 1160 528z" fill="#0000a6"/>
<g id="lines" fill="none" stroke="#000" shape-rendering="crispEdges"></g>
</svg>
<div class="heading"><b>A: compression test</b><span>Equivalent Stress</span><span>Type: Equivalent (von-Mises) Stress</span><span>Unit: Pa</span><span>Time: 1</span><span>17-09-2024 14:10</span></div>
<div class="legend"><div class="swatches"><i class="c1"></i><i class="c2"></i><i class="c3"></i><i class="c4"></i><i class="c5"></i><i class="c6"></i><i class="c7"></i><i class="c8"></i><i class="c9"></i></div>
<ol><li><b>3.5957e+11 Max</b></li><li>3.1979e+11</li><li>2.8002e+11</li><li>2.4024e+11</li><li>2.0047e+11</li><li>1.6069e+11</li><li>1.2092e+11</li><li>8.114e+10</li><li>4.1365e+10</li><li><b>1.5891e9 Min</b></li></ol></div>
<div class="brand"><b>ANSYS</b><span>R19.2</span></div>
<div class="scalebar"><div class="ticks"><span>0.000</span><span>0.050</span><span>0.100 (m)</span></div><div class="segs"><i></i><i></i><i></i><i></i></div><div class="ticks lower"><span>0.025</span><span>0.075</span></div></div>
<svg class="triad" viewBox="1250 470 110 84" role="img" aria-label="Axis triad"><path d="M1281 484L1268 491" stroke="#00c" stroke-width="3"/><circle cx="1265" cy="493" r="5" fill="#0000c8"/><path d="M1281 483.500L1322 486" stroke="#070" stroke-width="3"/><path d="M1320 480l16 6-16 6z" fill="#080"/><path d="M1281.500 484v46" stroke="#b00000" stroke-width="3"/><path d="M1276 527h12l-6 14z" fill="#900"/><circle cx="1297.500" cy="518" r="6" fill="#0bb"/><circle cx="1296" cy="516" r="2" fill="#5ee"/><text x="1343" y="488" fill="#0a0">Y</text><text x="1281" y="551" fill="#f00">X</text><text x="1255" y="499" fill="#00f">Z</text></svg>
</div>
<nav class="tabs"><svg class="slant on" viewBox="0 0 8 17"><path d="M0 0v17h7.500L.5 1z" class="wedge"/><path d="M.5 0l7 16"/></svg><button class="on">Geometry</button><svg class="slant on" viewBox="0 0 8 17"><path d="M8 0v17H1z" class="wedge"/><path d="M8 0L1 16.500M4 8l4 8"/></svg><button>Print Preview</button><svg class="slant" viewBox="0 0 8 17"><path d="M1 0l7 16.500M4.500 8L0 16.500"/></svg><button>Report Preview</button><svg class="slant" viewBox="0 0 8 17"><path d="M8 0L1 16.500"/></svg></nav>
</section>
<div class="bottom">
<section class="pane graph">
<h2>Graph<svg class="pin"><use href="#pin"/></svg></h2>
<div class="frame thin">
<div class="anim"><i class="grip narrow"></i><span class="al">Animation</span>
<button class="ic24" aria-label="First frame" disabled><svg class="ic"><use href="#first"/></svg></button>
<button class="ic24" aria-label="Play"><svg class="ic"><use href="#play"/></svg></button>
<button class="ic24 pressed" aria-label="Stop"><svg class="ic"><use href="#stop"/></svg></button>
<button class="ic24" aria-label="Last frame" disabled><svg class="ic"><use href="#last"/></svg></button>
<i class="sep"></i>
<button class="ic24 pressed" aria-label="Distributed"><svg class="ic"><use href="#comb"/></svg></button>
<button class="ic24" aria-label="Result sets"><svg class="ic"><use href="#combb"/></svg></button>
<i class="sep"></i>
<span class="combo c-a"><select aria-label="Frames"><option>20 Frames</option></select></span>
<span class="combo c-a"><select aria-label="Duration"><option>2 Sec (Auto)</option></select></span>
<button class="ic24" aria-label="Export video"><svg class="ic"><use href="#save"/></svg></button>
<i class="sep"></i>
<button class="ic24" aria-label="Zoom to range"><svg class="ic"><use href="#magr"/></svg></button>
<button class="ic24" aria-label="Table cells"><svg class="ic"><use href="#grid3"/></svg></button>
<i class="sep"></i>
<button class="ic24" aria-label="Histogram" disabled><svg class="ic"><use href="#hist"/></svg></button><span class="three">3</span>
</div>
<div class="plot"><div class="p1"></div><div class="p2"></div></div>
</div>
</section>
<section class="pane tabular">
<h2>Tabular Data<svg class="pin"><use href="#pin"/></svg></h2>
<div class="frame thin dark">
<table class="data">
<tr><th></th><th>Time [s]</th><th><label class="mn"><input type="checkbox" checked>Minimum [Pa]</label></th><th><label class="mx"><input type="checkbox" checked>Maximum [Pa]</label></th><th><label class="av"><input type="checkbox" checked>Average [Pa]</label></th></tr>
<tr><td>1</td><td>1.</td><td>1.5891e+009</td><td>3.5957e+011</td><td>4.5025e+010</td></tr>
</table>
<div class="watermark"><b>Activate Windows</b><span>Go to Settings to activate Windows.</span></div>
</div>
</section>
</div>
</div>
</main>

<footer class="status">
<span class="s1"></span><span class="s2"></span><span class="s3"><svg class="ic"><use href="#msg"/></svg>8 Messages</span><span class="s4">No Selection</span><span class="s5"><span>Metric (m, kg, N, s, V, A)</span><span>Degrees</span><span>rad/s</span><span>Celsius</span></span>
<svg class="sizegrip" viewBox="0 0 16 16"><path d="M2 15L15 2M7 15l8-8M12 15l3-3" stroke="#a0a0a0" stroke-width="1.500"/></svg>
</footer>

<div class="taskbar">
<button class="start" aria-label="Start"><svg viewBox="0 0 16 16"><path d="M0 2l7-1v6.500H0zM8 1l8-1v7.500H8zM0 8.500h7V15l-7-1zM8 8.500h8V16l-8-1z" fill="#fff"/></svg></button>
<label class="search"><svg viewBox="0 0 16 16"><circle cx="10" cy="6" r="5.500" fill="none" stroke="#222"/><path d="M6 10l-6 6" stroke="#222"/></svg><input placeholder="Type here to search" aria-label="Type here to search"></label>
<button class="app" aria-label="Task View"><svg viewBox="0 0 18 18"><path d="M1 4V1.500h10V4M1 14v2.500h10V14M1.500 5.500h9v7h-9zM15.500 1v3M15.500 9v8M14 6h3v2h-3z" fill="none" stroke="#fff" stroke-width="1.200"/></svg></button>
<button class="app run" aria-label="Workbench"><svg class="big" viewBox="0 0 24 24"><rect width="24" height="24" rx="4" fill="url(#gold)"/><path d="M8 0h8l7 21-5 2-6-17-6 17-5-2z" fill="#222"/><path d="M12 6l5 18H7z" fill="#f8b800"/></svg></button>
<button class="app run" aria-label="Photos"><svg class="big" viewBox="0 0 24 24"><rect x="1" y="1" width="22" height="22" rx="3" fill="url(#photo)"/><path d="M1 18l10-9 12 11v1q0 2-2 2H3q-2 0-2-2z" fill="#3fd0f8"/><path d="M1 18l6-5 6 5-6 5H3q-2 0-2-2z" fill="#1aa0e0"/><circle cx="17" cy="5" r="2" fill="#fff"/></svg></button>
<button class="app run active" aria-label="Mechanical"><svg class="big"><use href="#logo"/></svg></button>
<div class="tray">
<button class="weather"><svg viewBox="0 0 24 16"><path d="M1 1h19v14H3q-2 0-2-2zM20 4h3v9q0 2-2 2M4 4.500h13M4 8h6v4H4zM12 8.500h5M12 11.500h5" fill="none" stroke="#fff" stroke-width="1.500"/></svg><span>34°C</span><span>Mostly cloudy</span></button>
<button aria-label="Hidden icons"><svg class="t12" viewBox="0 0 12 12"><path d="M1 9l5-6 5 6" fill="none" stroke="#fff" stroke-width="1.300"/></svg></button>
<button aria-label="Muted"><svg class="t16" viewBox="0 0 16 16"><path d="M2 6h3l4-4v12l-4-4H2zM11 6l4 4M15 6l-4 4" fill="none" stroke="#fff"/></svg></button>
<button class="lang">ENG</button>
<button class="clock"><span>14:11</span><span>17-09-2024</span></button>
<button aria-label="Notifications"><svg class="t18" viewBox="0 0 18 18"><path d="M1 1h16v13h-6l-2 3-2-3H1z" fill="#fff"/><path d="M4 5h10M4 8h10M4 11h7" stroke="#23364a"/></svg></button>
<i class="peek"></i>
</div>
</div>
<script src="mesh.js"></script>
</body>
</html>
```
FILE: styles.css
```css
* { box-sizing: border-box; }
html, body { height: 100%; margin: 0; }
body { display: flex; flex-direction: column; background: #f0f0f0; color: #000; font: 11px/16px "Open Sans", "Noto Sans", sans-serif; overflow: hidden; }
button, input, select { font: inherit; color: inherit; }
button { border: 0; background: none; padding: 0; margin: 0; }
h1, h2 { margin: 0; font-size: 11px; font-weight: 400; }
ul, ol { margin: 0; padding: 0; list-style: none; }
.sprite { position: absolute; width: 0; height: 0; }
.ic { width: 16px; height: 16px; flex: none; display: block; }

.titlebar { display: flex; align-items: center; height: 24px; background: #fff; padding-left: 2px; gap: 5px; flex: none; }
h1 { font: 12px/16px Roboto, "Open Sans", sans-serif; }
.winbtns { margin-left: auto; display: flex; }
.winbtns button { width: 46px; height: 20px; }
.winbtns svg { width: 12px; height: 12px; }

.bar { display: flex; align-items: center; height: 24px; flex: none; border-bottom: 1px solid #a0a0a0; border-top: 1px solid #fff; white-space: nowrap; }
.bar.last { border-bottom: 0; }
.grip { flex: none; width: 14px; height: 18px; display: block; }
.grip::before { content: ""; display: block; width: 3px; height: 18px; margin-left: 2px; border: 1px solid #a0a0a0; border-width: 0 1px 1px 0; }
.grip.narrow { width: 9px; }
.end { flex: none; width: 3px; height: 22px; border-left: 1px solid #a0a0a0; background: #fff; }
.sep { flex: none; width: 8px; height: 18px; margin-left: 1px; }
.sep::before { content: ""; display: block; width: 2px; height: 18px; border-left: 1px solid #a0a0a0; background: #fff; margin-left: -3px; }
.sep.tight { width: 4px; margin-left: 0; }
.menu { display: flex; gap: 12px; padding-right: 10px; }
.ib { width: 27px; flex: none; text-align: left; }
.ibd { width: 20px; flex: none; }
.push { margin-left: 6px; width: 14px; }
.pressed { background: #f9f9f9; border: 1px solid #a0a0a0; border-right-color: #fff; border-bottom-color: #fff; }
.ib.pressed { height: 21px; padding-left: 5px; }
.pad { margin-left: 5px; }
.dd { width: 16px; height: 16px; flex: none; display: flex; align-items: center; }
.dd::before, .combo::after { content: ""; border: 4px solid transparent; border-top-color: #000; border-bottom: 0; }
.dd.gray::before { border-top-color: #a0a0a0; }
.num { position: relative; color: #a0a0a0; }
.num b { position: absolute; right: 4px; bottom: -2px; font-size: 11px; line-height: 12px; }
.tb { display: flex; align-items: center; gap: 2px; flex: none; }
.off { color: #a0a0a0; }
.w-s { width: 44px; }
.w-m { width: 56px; }
.w-p { width: 62px; }
.w-r { width: 75px; }
.w-r2 { width: 68px; }
.w-c { width: 76px; }
.w-l { width: 88px; }
.w-xl { width: 94px; }
.w-mx { width: 98px; }
.w-xxl { width: 103px; }
.w-res { width: 42px; }
.w-disp { width: 52px; }
.lbl { flex: none; padding-bottom: 3px; }
.lbl.w-res { padding-bottom: 0; }
.small { font: 11px/16px "DejaVu Sans Condensed", sans-serif; padding-bottom: 3px; }
.combo { position: relative; display: block; flex: none; height: 18px; background: #fff; }
.combo::after { position: absolute; right: 4px; top: 7px; pointer-events: none; }
.combo select { appearance: none; border: 0; background: none; width: 100%; height: 18px; padding: 0 16px 0 4px; font: 11px/16px "Open Sans", sans-serif; color: #000; opacity: 1; display: block; }
.combo.flat { background: #f4f4f4; border: 1px solid #fff; }
.combo.flat select { color: #858585; height: 16px; }
.combo.flat::after { border-top-color: #a0a0a0; }
.c-l { width: 146px; margin-right: 8px; }
.c-e { width: 138px; margin-right: 5px; }
.c-m { width: 134px; margin-right: 9px; }
.c-s { width: 114px; }
.c-f { width: 96px; margin-right: 7px; }
.c-a { width: 136px; margin-right: 8px; }
.slider { appearance: none; width: 136px; height: 16px; margin: 0 12px 0 0; background: linear-gradient(#888, #888) no-repeat 0 6px / 100% 2px; }
.slider::-webkit-slider-thumb { appearance: none; width: 6px; height: 14px; background: #f0f0f0; border: 1px solid #aaa; border-right-color: #555; }

main { flex: 1; min-height: 0; display: flex; gap: 4px; padding: 1px 1px 6px 0; background: #f4f4f4; }
aside { width: 238px; flex: none; display: flex; flex-direction: column; gap: 6px; min-height: 0; }
.pane { display: flex; flex-direction: column; min-width: 0; min-height: 0; }
.pane h2 { display: flex; align-items: center; justify-content: space-between; height: 20px; flex: none; padding: 0 4px; background: linear-gradient(90deg, #bccad8, #d8e6f3); }
.pin { width: 8px; height: 10px; }
.outline { flex: 5 1 0; }
.details { flex: 4 1 0; }
.frame { flex: 1; min-height: 0; display: flex; flex-direction: column; border: 1px solid #e3e3e3; border-left-color: #696969; border-top: 2px solid #808080; background: #fff; margin: 0 1px; }
.frame.thin { border-top-width: 1px; }
aside .frame { margin-left: 0; }
.frame.row { flex-direction: row; }
.bar.sub { background: #f0f0f0; }
.nob { border-bottom: 0; }
.flabel { width: 35px; margin-left: -4px; flex: none; }
.ftext { flex: 1; min-width: 0; border: 0; height: 18px; background: #fff; }
.ic24 { width: 24px; height: 20px; flex: none; display: flex; align-items: center; justify-content: center; }
.sub .ic24 { justify-content: flex-start; }
.scrollbox { display: flex; flex: 1; min-height: 0; }
.tree { flex: 1; min-width: 0; overflow: hidden; padding-left: 40px; font: 11px/17px "DejaVu Sans Condensed", "Noto Sans", sans-serif; }
.tree li { display: flex; height: 16px; white-space: nowrap; }
.tree i { width: 27px; flex: none; position: relative; }
.tree i:has(+ svg) { width: 14px; }
.tree .v { border-left: 1px dotted #808080; }
.tree .l { background: linear-gradient(#aaa, #aaa) no-repeat 0 0 / 1px 8px; }
.tree .h::before { content: ""; position: absolute; left: 0; right: 0; top: 8px; border-top: 1px dotted #808080; }
.tree .m::after, .box { content: ""; width: 9px; height: 9px; border: 1px solid #808080; background: linear-gradient(#000, #000) no-repeat 1px 3px / 5px 1px, #fff; }
.tree .m::after { position: absolute; left: -5px; top: 4px; }
.ck { width: 10px; height: 10px; flex: none; margin: 7px -2px 0 0; }
.tree .ic { margin-right: 3px; }
.tree span { padding: 0 2px; }
.tree .sol, .tree .b { font-weight: 700; }
.tree .sol { background: #ffa500; }
.tree .sel { background: #f0f0f0; }
.vscroll { width: 17px; flex: none; background: #f0f0f0; display: flex; flex-direction: column; align-items: center; padding: 5px 0; gap: 6px; }
.vscroll svg { width: 8px; height: 6px; flex: none; }
.vscroll path, .hscroll path { fill: none; stroke: #505050; stroke-width: 2; }
.track { flex: 1; width: 15px; min-height: 0; display: flex; flex-direction: column; }
.thumb { width: 15px; background: #cdcdcd; display: block; }
.t-out { margin-top: 46px; height: 60px; }
.t-det { height: 98px; }
.hscroll { height: 16px; flex: none; background: #f0f0f0; display: flex; align-items: center; gap: 6px; padding: 0 22px 0 5px; }
.hscroll svg { width: 6px; height: 8px; flex: none; }
.htrack { flex: 1; height: 15px; }
.hthumb { display: block; width: 85%; height: 15px; background: #cdcdcd; }

.tablewrap { flex: 1; min-width: 0; overflow: hidden; }
.props { width: 100%; table-layout: fixed; border-collapse: collapse; line-height: 17px; }
.k0 { width: 15px; }
.k2 { width: 81px; }
.props td, .props th { height: 18px; padding: 0 0 0 2px; border: 1px solid #a0a0a0; border-top: 0; text-align: left; overflow: hidden; white-space: nowrap; text-overflow: ellipsis; }
.props td + td + td { padding-left: 3px; }
.props .gut { border: 0; padding: 0 0 0 3px; }
.props .ro { background: #e8e6e1; }
.props label { display: flex; align-items: center; gap: 4px; }
.props input { appearance: none; width: 12px; height: 12px; margin: 0; border: 1px solid #c0c0c0; }
.box { display: block; }

.work { flex: 1; min-width: 0; display: flex; flex-direction: column; gap: 7px; }
.view { flex: 1; min-height: 0; display: flex; flex-direction: column; border: 1px solid #696969; border-width: 1px 0 0 2px; }
.scene { flex: 1; min-height: 0; position: relative; overflow: hidden; background: linear-gradient(#6c8cde, #fcfdff); }
.model { position: absolute; inset: 0; width: 100%; height: 100%; }
.heading { position: absolute; left: 16px; top: 16px; display: flex; flex-direction: column; }
.legend { position: absolute; left: 16px; top: 127px; display: flex; gap: 9px; line-height: 18px; }
.swatches { margin-top: 8px; width: 17px; height: 163px; display: flex; flex-direction: column; border: 1px solid #000; border-top-width: 2px; border-bottom-width: 2px; }
.swatches i { flex: 1; }
.swatches i + i { border-top: 1px solid #000; }
.c1 { background: #f00; } .c2 { background: #ffb200; } .c3 { background: #ff0; } .c4 { background: #b2ff00; } .c5 { background: #0f0; } .c6 { background: #00ffb2; } .c7 { background: #0ff; } .c8 { background: #00b2ff; } .c9 { background: #00f; }
.brand { position: absolute; right: 24px; top: 18px; color: #fff; text-align: right; display: flex; flex-direction: column; }
.brand b { font-size: 26px; line-height: 38px; font-weight: 600; }
.brand span { font-size: 17px; line-height: 6px; }
.scalebar { position: absolute; left: calc(50% - 104px); bottom: 13px; width: 206px; }
.ticks { display: flex; justify-content: space-between; margin: 0 -34px 0 -16px; }
.ticks.lower { justify-content: space-around; margin: 0; }
.segs { display: flex; height: 8px; border: 1px solid #000; }
.segs i { flex: 1; background: #fff; }
.segs i:nth-child(odd) { background: #000; }
.triad { position: absolute; right: 5px; bottom: 3px; width: 110px; height: 84px; }
.tabs { height: 18px; flex: none; display: flex; align-items: stretch; border: 1px solid #000; border-left: 0; background: #f0f0f0; line-height: 15px; }
.tabs button { padding: 0 2px 0 1px; }
.tabs .on { background: #fff; font-weight: 700; }
.slant, .tabs .slant.on { width: 8px; height: 17px; flex: none; background: #f0f0f0; margin-top: -1px; }
.slant path { fill: none; stroke: #000; }
.tabs .slant.on { background: #fff; }
.slant .wedge { fill: #f0f0f0; stroke: none; }

.bottom { display: flex; gap: 5px; flex: none; height: 120px; }
.graph { flex: 656 1 0; }
.tabular { flex: 460 1 0; }
.anim { display: flex; align-items: center; height: 26px; flex: none; background: #f0f0f0; white-space: nowrap; }
.al { width: 60px; flex: none; font-size: 12px; }
.anim .sep { margin: 0 0 0 6px; width: 5px; }
.anim .combo { height: 18px; }
.three { color: #808080; padding-left: 4px; }
.plot { flex: 1; padding: 19px 19px 0 51px; display: flex; flex-direction: column; gap: 27px; }
.p1 { height: 4px; border: 1px solid #000; }
.p2 { height: 15px; border: 1px solid #a0a0a0; }
.dark { background: #a0a0a0; position: relative; }
.data { border-collapse: collapse; align-self: flex-start; line-height: 16px; }
.data th, .data td { height: 17px; padding: 0 6px 0 3px; border: 1px solid #888; border-width: 0 1px 1px 0; text-align: left; font-weight: 400; background: #f0f0f0; white-space: nowrap; }
.data td { background: #e8e6e1; border-color: #b8b8b8; }
.data td:first-child { background: #f0f0f0; color: #306; }
.data label { display: flex; align-items: center; gap: 7px; padding-right: 2px; }
.data input { margin: 0; width: 14px; height: 14px; appearance: none; border: 1px solid #696969; background: #fff; position: relative; }
.data input::after { content: ""; position: absolute; left: 4px; top: 1px; width: 3px; height: 6px; border: solid #000; border-width: 0 2px 2px 0; transform: rotate(40deg); }
.mn { color: #c00020; } .mx { color: #109020; } .av { color: #1010d0; }
.watermark { position: absolute; left: 168px; top: 47px; color: #a9a9a9; display: flex; flex-direction: column; }
.watermark b { font-size: 19px; line-height: 26px; font-weight: 400; }
.watermark span { font-size: 14px; line-height: 18px; }

.status { display: flex; gap: 2px; height: 20px; flex: none; padding-bottom: 1px; white-space: nowrap; }
.status > span { border: 1px solid #a0a0a0; border-right-color: #fff; border-bottom: 0; padding-left: 2px; display: flex; align-items: center; gap: 4px; }
.s1 { width: 368px; } .s2 { width: 176px; } .s3 { width: 148px; } .s4 { flex: 1; }
.s5 { width: 312px; font-size: 12px; }
.status > .s5 { gap: 11px; }
.sizegrip { width: 16px; height: 16px; margin: 4px 0 0 10px; flex: none; }

.taskbar { display: flex; height: 40px; flex: none; background: linear-gradient(90deg, #233648 0, #233648 52%, #30302f 61%, #33302e 66%, #243444 74%, #203245 100%); color: #fff; }
.start { width: 48px; }
.start svg { width: 16px; height: 16px; display: block; margin: 0 auto; }
.search { width: 288px; background: #f0f0f0; border: 1px solid #bbb; display: flex; align-items: center; gap: 11px; padding-left: 12px; }
.search svg { width: 16px; height: 16px; }
.search input { border: 0; background: none; flex: 1; min-width: 0; font-size: 15px; padding: 0; outline: 0; }
.search input::placeholder { color: #444; opacity: 1; }
.app { width: 46px; margin: 0 1px; display: flex; align-items: center; justify-content: center; border: solid transparent; border-width: 3px 0; }
.app svg { width: 18px; height: 18px; }
.app .big { width: 24px; height: 24px; }
.app.run { border-bottom-color: #76b9ed; width: 41px; margin: 0 0 0 7px; }
.app.active { background: #4e5c69; width: 48px; margin: 0 0 0 5px; border-top-color: #4e5c69; }
.tray { margin-left: auto; display: flex; align-items: center; }
.weather { display: flex; align-items: center; gap: 8px; font-size: 14px; margin-right: 24px; }
.weather svg { width: 24px; height: 16px; }
.t12 { width: 12px; height: 12px; display: block; margin-right: 8px; }
.t16 { width: 16px; height: 16px; display: block; margin-right: 12px; }
.t18 { width: 18px; height: 18px; display: block; margin-right: 20px; }
.lang { margin-right: 13px; font-size: 12px; }
.clock { display: flex; flex-direction: column; align-items: center; line-height: 18px; margin-right: 16px; }
.peek { height: 40px; width: 4px; border-left: 1px solid #5a6672; }
```
FILE: mesh.js
```js
const lines = document.getElementById("lines");

function draw(points) {
  const line = document.createElementNS("http://www.w3.org/2000/svg", "polyline");
  line.setAttribute("points", points.join(" "));
  lines.appendChild(line);
}

/* element rows, from the back edge to the front edge */
const rows = [
  [433,369, 445,368, 640,379, 1030,403, 1163,410, 1215,413, 1260,416, 1293,419, 1313,428],
  [417,380, 440,379, 640,391, 1030,415, 1130,420, 1197,423, 1247,427, 1275,431, 1295,440],
  [395,393, 420,391, 640,404, 1030,427, 1225,439, 1257,443, 1276,452],
  [375,405, 400,404, 640,417, 1030,440, 1207,450, 1238,455, 1257,463],
  [355,416, 380,414, 640,429, 1030,452, 1187,463, 1220,466, 1238,476],
  [337,427, 362,425, 640,441, 1030,465, 1170,474, 1202,477, 1219,487],
  [318,437, 350,436, 640,454, 1030,477, 1147,486, 1183,488, 1201,498],
  [302,449, 330,447, 640,467, 1030,492, 1130,497, 1163,500, 1182,509],
  [279,467, 333,466, 430,471, 1112,511, 1143,515, 1162,520],
  [280,470, 382,475, 640,490, 1143,521],
];
rows.forEach(draw);

/* element columns across the plate and down the front face */
for (let k = 0; k <= 16; k++) {
  const fx = 333 + 48.7 * k, fy = 466 + 0.058 * (fx - 333);
  const bx = 493 + 49.1 * k, by = 362 + 0.0585 * (bx - 493);
  draw([fx + 2, fy + 10, fx, fy + 6, fx, fy, fx + 6, fy - 7, fx + 18, fy - 16, bx - 15, by + 9, bx, by]);
}

/* outline, ridge and lip */
draw([281,474, 279,467, 302,449, 433,369, 441,365, 483,361, 640,371, 1030,394, 1230,406, 1287,409, 1317,414, 1333,415, 1332,425, 1352,448, 1334,459, 1327,447, 1318,447, 1297,463, 1243,494, 1187,528, 1177,544, 1164,552, 1143,526, 1040,520, 640,496, 281,474]);
draw([1162,527, 1162,519, 1182,509, 1313,428, 1333,415]);
draw([1162,526, 1332,425]);
draw([1143,515, 1177,544]);
draw([1318,447, 1325,440, 1342,441]);
[[1182,509, 1195,522], [1201,498, 1215,512], [1219,487, 1235,500], [1238,476, 1253,489], [1257,463, 1272,476], [1276,452, 1291,464], [1295,440, 1309,453], [1313,428, 1325,442]].forEach(draw);
```
